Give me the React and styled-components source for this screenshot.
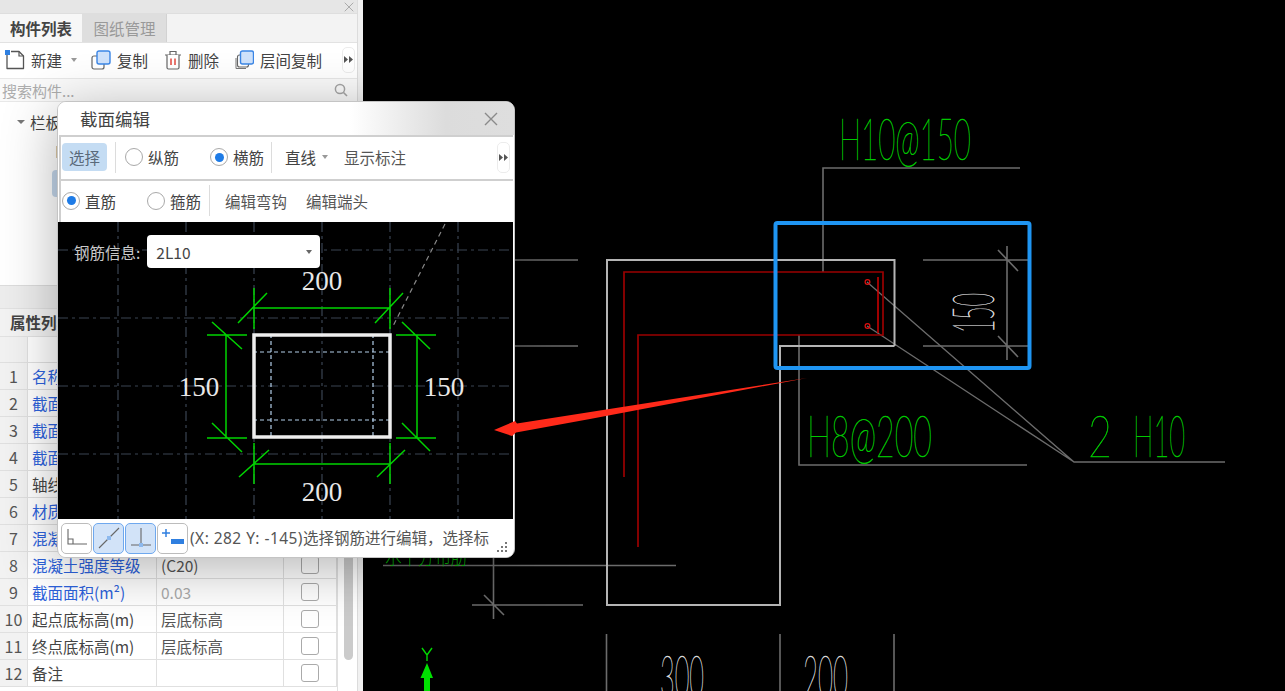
import React from 'react';
import styled, { createGlobalStyle } from 'styled-components';

const GlobalStyle = createGlobalStyle`
  html, body {
    margin: 0;
    padding: 0;
    height: 100%;
    background: #000;
    overflow: hidden;
    font-family: "Noto Sans CJK SC", "Noto Sans", sans-serif;
  }
  #root { height: 100%; }
  * { box-sizing: border-box; }
`;

const Page = styled.div`
  position: relative;
  display: grid;
  grid-template-columns: 363px 1fr;
  width: 100%;
  height: 691px;
  overflow: hidden;
`;

/* ---------- left panel ---------- */

const LeftPanel = styled.aside`
  display: flex;
  flex-direction: column;
  height: 691px;
  overflow: hidden;
  background: #f1f1f1;
  padding-right: 5px;
  font-size: 15.5px;
  color: #444;
`;

const PanelInner = styled.div`
  display: flex;
  flex-direction: column;
  height: 100%;
  background: #fff;
  border-right: 1px solid #dcdcdc;
`;

const PanelTitle = styled.div`
  display: flex;
  align-items: center;
  justify-content: flex-end;
  height: 13px;
  padding-right: 3px;
  background: #e6e6e6;
  color: #aaa;
`;

const TabBar = styled.div`
  display: flex;
  height: 30px;
  background: #f3f3f3;
  border-top: 1px solid #dedede;
  border-bottom: 1px solid #e2e2e2;
`;

const Tab = styled.div`
  display: flex;
  align-items: center;
  justify-content: center;
  width: ${p => (p.$active ? '82px' : '85px')};
  padding-left: 1px;
  padding-bottom: 1px;
  font-weight: ${p => (p.$active ? 700 : 400)};
  color: ${p => (p.$active ? '#444' : '#999')};
  background: ${p => (p.$active ? '#f7f7f7' : '#dedede')};
  border-right: ${p => (p.$active ? '1px solid #f7f7f7' : '1px solid #d2d2d2')};
`;

const Toolbar = styled.div`
  display: flex;
  align-items: center;
  height: 35px;
  flex-shrink: 0;
  padding-bottom: 2px;
  background: #fff;
`;

const ToolItem = styled.div`
  display: flex;
  align-items: center;
  gap: 6px;
  margin-left: ${p => p.$ml}px;
  white-space: nowrap;
`;

const Caret = styled.span`
  display: inline-block;
  width: 0;
  height: 0;
  margin-left: ${p => p.$ml || 0}px;
  border-left: ${p => p.$size || 3.5}px solid transparent;
  border-right: ${p => p.$size || 3.5}px solid transparent;
  border-top: ${p => p.$size || 4}px solid ${p => p.$color || '#999'};
`;

const MoreButton = styled.div`
  display: flex;
  align-items: center;
  justify-content: center;
  width: 13px;
  height: ${p => p.$h}px;
  margin-left: auto;
  margin-right: ${p => p.$mr}px;
  border: 1px solid #ececec;
  border-radius: 5px;
  background: #fff;
`;

const SearchBar = styled.div`
  display: flex;
  align-items: center;
  justify-content: space-between;
  height: 24px;
  flex-shrink: 0;
  padding: 0 9px 0 2px;
  color: #adadad;
  font-size: 15px;
  background: #fafafa;
  border-top: 1px solid #e8e8e8;
  border-bottom: 1px solid #e8e8e8;
`;

const Tree = styled.div`
  height: 183px;
  flex-shrink: 0;
  padding-top: 8px;
  background: #fff;
`;

const TreeRow = styled.div`
  display: flex;
  align-items: center;
  gap: 5px;
  height: 24px;
  padding-left: 17px;
`;

const TreeIcon = styled.div`
  width: 4px;
  height: 12px;
  margin: 12px 0 0 56px;
  background: #dcc9a6;
`;

const TreeSelected = styled.div`
  width: 120px;
  height: 27px;
  margin: 12px 0 0 52px;
  border-radius: 4px;
  background: #c3d6ea;
`;

const SectionGap = styled.div`
  height: 23px;
  flex-shrink: 0;
  background: #ededed;
  border-top: 1px solid #dcdcdc;
`;

const SectionTab = styled.div`
  display: flex;
  align-items: center;
  height: 29px;
  flex-shrink: 0;
  padding-left: 10px;
  padding-bottom: 2px;
  font-weight: 700;
  background: #f3f3f3;
  border-top: 1px solid #e2e2e2;
  border-bottom: 1px solid #e2e2e2;
`;

const TableWrap = styled.div`
  display: flex;
  flex: 1;
  min-height: 0;
`;

const Table = styled.div`
  width: 337px;
  flex-shrink: 0;
`;

const Row = styled.div`
  display: grid;
  grid-template-columns: 28px 129px 127px 53px;
  height: ${p => (p.$head ? '26px' : '27px')};
  border-bottom: 1px solid #e0e0e0;
`;

const Cell = styled.div`
  display: flex;
  align-items: center;
  justify-content: ${p => (p.$center ? 'center' : 'flex-start')};
  padding: 0 0 1px 4px;
  overflow: hidden;
  white-space: nowrap;
  color: ${p => p.$color || '#444'};
  border-right: 1px solid #e0e0e0;
`;

const IndexCell = styled(Cell)`
  justify-content: center;
  padding: 0 0 1px;
  font-size: 16px;
  color: #555;
  background: #f2f2f2;
`;

const CheckCell = styled(Cell)`
  justify-content: center;
  padding: 0 1px 0 0;
`;

const CheckBox = styled.span`
  width: 18px;
  height: 18px;
  border: 1.5px solid #aaa;
  border-radius: 3px;
  background: #fff;
`;

const ScrollTrack = styled.div`
  flex: 1;
  padding: 26px 4px 0 6px;
  border-left: 1px solid #e0e0e0;
`;

const ScrollThumb = styled.div`
  height: 297px;
  border-radius: 5px;
  background: #cbcbcb;
`;

/* ---------- cad canvas ---------- */

const CadArea = styled.main`
  background: #000;
  overflow: hidden;
`;

const CadSvg = styled.svg`
  display: block;
`;

/* ---------- floating dialog ---------- */

const Dialog = styled.section`
  position: absolute;
  left: 57px;
  top: 101px;
  display: flex;
  flex-direction: column;
  width: 458px;
  height: 457px;
  padding: 0 1px;
  overflow: hidden;
  color: #444;
  font-size: 15.5px;
  background: #fff;
  border: 1px solid #c4c4c4;
  border-radius: 9px;
  box-shadow: 0 10px 55px rgba(0, 0, 0, 0.3);
`;

const DialogTitle = styled.header`
  display: flex;
  align-items: center;
  justify-content: space-between;
  height: 33px;
  flex-shrink: 0;
  margin: 0 -1px;
  padding: 0 16px 0 22px;
  font-size: 17.5px;
  color: #444;
  background: linear-gradient(90deg, #fff 0%, #fff 64%, #dcdcdc 85%, #dedede 100%);
`;

const DialogBar = styled.div`
  display: flex;
  align-items: center;
  height: ${p => p.$h}px;
  flex-shrink: 0;
  padding-bottom: 2px;
  background: #fff;
  border-top: 2px solid #cfcfcf;
  border-left: 2px solid #cfcfcf;
  white-space: nowrap;
`;

const SelectButton = styled.div`
  display: flex;
  align-items: center;
  justify-content: center;
  width: 45px;
  height: 28px;
  margin-left: 1px;
  border-radius: 4px;
  color: #5a6a7a;
  background: #c4dcf3;
`;

const Divider = styled.span`
  width: 1px;
  height: 31px;
  margin-left: ${p => p.$ml}px;
  background: #dcdcdc;
`;

const RadioItem = styled.label`
  display: flex;
  align-items: center;
  gap: 5px;
  margin-left: ${p => p.$ml}px;
`;

const RadioMark = styled.span`
  display: flex;
  align-items: center;
  justify-content: center;
  width: 18px;
  height: 18px;
  border: 1.5px solid #a9a9a9;
  border-radius: 50%;
  background: #fff;
  &::after {
    content: '';
    width: 9px;
    height: 9px;
    border-radius: 50%;
    background: ${p => (p.$checked ? '#1e7be6' : 'transparent')};
  }
`;

const BarText = styled.span`
  margin-left: ${p => p.$ml}px;
  color: #555;
`;

const Combo = styled.div`
  display: flex;
  align-items: center;
  height: 28px;
  margin-left: 10px;
  padding-left: 3px;
  border-radius: 4px;
`;

const DrawArea = styled.div`
  position: relative;
  flex: 1;
  min-height: 0;
  margin-left: -1px;
  background: #000;
`;

const RebarField = styled.div`
  position: absolute;
  left: 16px;
  top: 13px;
  display: flex;
  align-items: center;
  gap: 7px;
  color: #c9c9c9;
`;

const RebarSelect = styled.div`
  display: flex;
  align-items: center;
  justify-content: space-between;
  width: 173px;
  height: 33px;
  padding: 0 8px 0 9px;
  border-radius: 4px;
  color: #444;
  background: #fff;
`;

const StatusBar = styled.footer`
  display: flex;
  align-items: center;
  height: 38px;
  flex-shrink: 0;
  padding: 0 3px 0 2px;
  gap: 1px;
  background: #fff;
  white-space: nowrap;
`;

const SnapButton = styled.div`
  display: flex;
  align-items: center;
  justify-content: center;
  width: 31px;
  height: 31px;
  flex-shrink: 0;
  border: 1.5px solid ${p => (p.$on ? '#6ea8ee' : '#bcbcbc')};
  border-radius: 5px;
  background: ${p => (p.$on ? '#d2e3f8' : '#fff')};
`;

const StatusText = styled.span`
  margin-left: 1px;
  padding-bottom: 2px;
  font-size: 15.5px;
  color: #555;
`;

const StatusCoords = styled.span`
  font-family: "Noto Sans", sans-serif;
  letter-spacing: 0.45px;
`;

const GripSlot = styled.span`
  display: flex;
  align-self: flex-end;
  margin: 0 2px 4px auto;
`;

const Overlay = styled.svg`
  position: absolute;
  left: 0;
  top: 0;
  pointer-events: none;
`;

/* ---------- icons ---------- */

const CloseIcon = ({ size, color }) => (
  <svg width={size} height={size} viewBox="0 0 14 14">
    <path d="M1 1 13 13M13 1 1 13" stroke={color} strokeWidth="1.4" fill="none" />
  </svg>
);

const MoreIcon = () => (
  <svg width="9" height="7" viewBox="0 0 9 7">
    <path d="M0 0 4 3.5 0 7ZM5 0 9 3.5 5 7Z" fill="#555" />
  </svg>
);

const NewIcon = () => (
  <svg width="20" height="20" viewBox="0 0 20 20">
    <path d="M2 4V18.5H18.5V6L14 1.5H6" fill="#fff" stroke="#555" strokeWidth="1.3" strokeLinejoin="round" />
    <path d="M14 1.5V6H18.5" fill="none" stroke="#555" strokeWidth="1.2" />
    <rect x="0" y="0" width="5" height="5" fill="#2f7fe0" />
  </svg>
);

const CopyIcon = () => (
  <svg width="20" height="20" viewBox="0 0 20 20">
    <rect x="1" y="6" width="12" height="13" rx="2" fill="#fff" stroke="#666" strokeWidth="1.2" />
    <rect x="6" y="1" width="13" height="13" rx="2" fill="#cfe2fb" stroke="#3b86e6" strokeWidth="1.4" />
  </svg>
);

const TrashIcon = () => (
  <svg width="18" height="20" viewBox="0 0 18 20">
    <path d="M1 5H17M6 5V1.5H12V5" fill="none" stroke="#666" strokeWidth="1.2" />
    <path d="M3 5V17.5Q3 19 4.5 19H13.5Q15 19 15 17.5V5" fill="#fff" stroke="#666" strokeWidth="1.2" />
    <path d="M7 8.5V15M11 8.5V15" stroke="#e2483f" strokeWidth="1.5" />
  </svg>
);

const LayerCopyIcon = () => (
  <svg width="20" height="20" viewBox="0 0 20 20">
    <path d="M2 8V18.5H12" fill="none" stroke="#777" strokeWidth="1" />
    <rect x="3.5" y="5" width="11" height="12" rx="2" fill="#fff" stroke="#666" strokeWidth="1.1" />
    <rect x="6.5" y="1" width="13" height="13" rx="2" fill="#cfe2fb" stroke="#3b86e6" strokeWidth="1.4" />
  </svg>
);

const SearchIcon = () => (
  <svg width="14" height="14" viewBox="0 0 14 14">
    <circle cx="6" cy="6" r="4.6" fill="none" stroke="#a5a5a5" strokeWidth="1.5" />
    <path d="M9.5 9.5 13 13" stroke="#a5a5a5" strokeWidth="1.6" />
  </svg>
);

const GripIcon = () => (
  <svg width="11" height="11" viewBox="0 0 11 11">
    <path d="M8 0h2v2H8zM4 4h2v2H4zM8 4h2v2H8zM0 8h2v2H0zM4 8h2v2H4zM8 8h2v2H8z" fill="#777" />
  </svg>
);

const SnapCorner = () => (
  <svg width="22" height="20" viewBox="0 0 22 20">
    <path d="M2 1V16H21M2 11H7V16" fill="none" stroke="#666" strokeWidth="1.1" />
  </svg>
);

const SnapLine = () => (
  <svg width="22" height="22" viewBox="0 0 22 22">
    <path d="M1 21 21 1" stroke="#666" strokeWidth="1.1" />
    <rect x="9" y="9" width="4" height="4" fill="#8db9ee" />
  </svg>
);

const SnapPerp = () => (
  <svg width="22" height="20" viewBox="0 0 22 20">
    <path d="M11 0V17M1 17H21" stroke="#666" strokeWidth="1.1" />
    <rect x="9" y="15" width="4" height="4" fill="#8db9ee" />
  </svg>
);

const SnapPlus = () => (
  <svg width="24" height="20" viewBox="0 0 24 20">
    <path d="M5 1V9M1 5H9" stroke="#2f7fe0" strokeWidth="1.5" />
    <rect x="10" y="11" width="13" height="5" fill="#2f7fe0" />
  </svg>
);

/* ---------- drawings ---------- */

const CadLabel = styled.text`
  font-family: "Lato", "Liberation Sans", "Noto Sans CJK SC", sans-serif;
  font-weight: 100;
  font-size: ${p => p.$size}px;
  fill: ${p => p.$color};
  stroke: ${p => p.$color};
  stroke-width: ${p => p.$stroke};
`;

const DimLabel = styled.text`
  font-family: "Liberation Serif", serif;
  font-size: 27px;
  fill: #e8e8e8;
  text-anchor: middle;
`;

const CadDrawing = () => (
  <CadSvg width="922" height="691" viewBox="363 0 922 691" fill="none">
    <g stroke="#6c6c6c" strokeWidth="1.6">
      <path d="M823 272V168H1020" />
      <path d="M799 335V465H1027" />
      <path d="M867 282 1074 462H1225M867 326 1074 462" strokeWidth="1.3" />
      <path d="M923 260H1030M923 346H1030M1007 246V360M998 250 1018 271M998 336 1018 357" />
      <path d="M515 260H578M515 346H578" />
      <path d="M383 565.5H676M493.5 558V619M472 605H583M484 595 504 615" />
      <path d="M606.5 634V691M780 634V691M894 634V691" />
    </g>
    <path d="M894.5 346V260H607V605H780V346H894.5" stroke="#b4b4b4" strokeWidth="2" />
    <path d="M624 477V272H883V335H638V547" stroke="#9a0000" strokeWidth="1.7" />
    <path d="M878 277V333" stroke="#d40000" strokeWidth="1.5" />
    <circle cx="867.5" cy="282" r="2.4" stroke="#e01010" strokeWidth="1.2" />
    <circle cx="867.5" cy="326" r="2.4" stroke="#e01010" strokeWidth="1.2" />
    <rect x="775.5" y="223" width="254" height="145" rx="2" stroke="#1f95f2" strokeWidth="4" />
    <CadLabel $size={58} $color="#00c800" $stroke={0.6} x="839" y="160" textLength="132" lengthAdjust="spacingAndGlyphs">H10@150</CadLabel>
    <CadLabel $size={58} $color="#00c800" $stroke={0.6} x="807" y="457" textLength="125" lengthAdjust="spacingAndGlyphs">H8@200</CadLabel>
    <CadLabel $size={58} $color="#00c800" $stroke={0.6} x="1088" y="457" textLength="24" lengthAdjust="spacingAndGlyphs">2</CadLabel>
    <CadLabel $size={58} $color="#00c800" $stroke={0.6} x="1133" y="457" textLength="52" lengthAdjust="spacingAndGlyphs">H10</CadLabel>
    <CadLabel $size={24} $color="#00c800" $stroke={0.2} x="385" y="564" textLength="82" lengthAdjust="spacingAndGlyphs">水平分布筋</CadLabel>
    <CadLabel $size={58} $color="#d8d8d8" $stroke={0.6} transform="translate(994 333) rotate(-90)" textLength="40" lengthAdjust="spacingAndGlyphs">150</CadLabel>
    <CadLabel $size={60} $color="#d8d8d8" $stroke={0.6} x="660" y="698" textLength="44" lengthAdjust="spacingAndGlyphs">300</CadLabel>
    <CadLabel $size={60} $color="#d8d8d8" $stroke={0.6} x="803" y="698" textLength="45" lengthAdjust="spacingAndGlyphs">200</CadLabel>
    <path d="M422 648 427 655 432 648M427 655V661" stroke="#00d800" strokeWidth="1.4" />
    <path d="M427 663 433 678H430V691H424V678H420.5Z" fill="#00e000" />
  </CadSvg>
);

const gridXs = [118, 186, 254, 322, 390, 458];
const gridYs = [250, 318, 386, 454];

const SectionDrawing = () => (
  <svg width="455" height="297" viewBox="58 222 455 297" fill="none" style={{ display: 'block' }}>
    <g stroke="#3a4452" strokeWidth="1.2" strokeDasharray="10 4 3 4">
      {gridXs.map(x => <path key={x} d={`M${x} 222V519`} />)}
      {gridYs.map(y => <path key={y} d={`M58 ${y}H513`} />)}
    </g>
    <path d="M445 224 392 328" stroke="#888" strokeWidth="1.2" strokeDasharray="5 4" />
    <g stroke="#00d400" strokeWidth="1.5">
      <path d="M254 308H390M254 288V329M390 288V329M238 323 267 293M375 323 403 293" />
      <path d="M254 464H390M254 443V484M390 443V484M239 477 269 450M377 477 405 450" />
      <path d="M226 335V438M207 335H247M207 438H247M212 322 242 349M212 423 242 452" />
      <path d="M417 335V438M396 335H436M396 438H436M402 322 430 349M402 423 430 451" />
    </g>
    <path d="M271 334V438M373 334V438M253 352H391M253 420H391" stroke="#b4cfe9" strokeWidth="1.2" strokeDasharray="4 3" />
    <rect x="254" y="335" width="136" height="102" stroke="#eeeeee" strokeWidth="3.5" />
    <DimLabel x="322" y="290">200</DimLabel>
    <DimLabel x="322" y="501">200</DimLabel>
    <DimLabel x="199" y="396">150</DimLabel>
    <DimLabel x="444" y="396">150</DimLabel>
  </svg>
);

const rows = [
  { label: '名称', blue: true, value: 'LB-1' },
  { label: '截面宽度(mm)', blue: true, value: '200' },
  { label: '截面高度(mm)', blue: true, value: '150' },
  { label: '截面类型', blue: true, value: '矩形' },
  { label: '轴线距左边线', value: '(100)' },
  { label: '材质', blue: true, value: '现浇混凝土' },
  { label: '混凝土类型', blue: true, value: '(现浇砼)' },
  { label: '混凝土强度等级', blue: true, value: '(C20)' },
  { label: '截面面积(m²)', blue: true, value: '0.03', muted: true },
  { label: '起点底标高(m)', value: '层底标高' },
  { label: '终点底标高(m)', value: '层底标高' },
  { label: '备注', value: '' },
];

const App = () => (
  <Page>
    <GlobalStyle />
    <LeftPanel>
      <PanelInner>
        <PanelTitle><CloseIcon size={10} color="#aaa" /></PanelTitle>
        <TabBar>
          <Tab $active>构件列表</Tab>
          <Tab>图纸管理</Tab>
        </TabBar>
        <Toolbar>
          <ToolItem $ml={5}><NewIcon />新建<Caret $ml={3} /></ToolItem>
          <ToolItem $ml={14}><CopyIcon />复制</ToolItem>
          <ToolItem $ml={16}><TrashIcon />删除</ToolItem>
          <ToolItem $ml={15}><LayerCopyIcon />层间复制</ToolItem>
          <MoreButton $h={26} $mr={2}><MoreIcon /></MoreButton>
        </Toolbar>
        <SearchBar>搜索构件...<SearchIcon /></SearchBar>
        <Tree>
          <TreeRow><Caret $color="#777" $size={4.5} />栏板</TreeRow>
          <TreeIcon />
          <TreeSelected />
        </Tree>
        <SectionGap />
        <SectionTab>属性列表</SectionTab>
        <TableWrap>
          <Table>
            <Row $head>
              <IndexCell />
              <Cell $center>属性名称</Cell>
              <Cell $center>属性值</Cell>
              <CheckCell />
            </Row>
            {rows.map((row, index) => (
              <Row key={row.label}>
                <IndexCell>{index + 1}</IndexCell>
                <Cell $color={row.blue ? '#2c62dc' : '#444'}>{row.label}</Cell>
                <Cell $color={row.muted ? '#aaa' : '#555'}>{row.value}</Cell>
                <CheckCell><CheckBox /></CheckCell>
              </Row>
            ))}
          </Table>
          <ScrollTrack><ScrollThumb /></ScrollTrack>
        </TableWrap>
      </PanelInner>
    </LeftPanel>

    <CadArea><CadDrawing /></CadArea>

    <Dialog>
      <DialogTitle>截面编辑<CloseIcon size={14} color="#8a8a8a" /></DialogTitle>
      <DialogBar $h={44}>
        <SelectButton>选择</SelectButton>
        <Divider $ml={8} />
        <RadioItem $ml={9}><RadioMark />纵筋</RadioItem>
        <RadioItem $ml={31}><RadioMark $checked />横筋</RadioItem>
        <Divider $ml={7} />
        <Combo>直线<Caret $ml={6} /></Combo>
        <BarText $ml={16}>显示标注</BarText>
        <MoreButton $h={31} $mr={3}><MoreIcon /></MoreButton>
      </DialogBar>
      <DialogBar $h={43}>
        <RadioItem $ml={1}><RadioMark $checked />直筋</RadioItem>
        <RadioItem $ml={31}><RadioMark />箍筋</RadioItem>
        <Divider $ml={8} />
        <BarText $ml={15}>编辑弯钩</BarText>
        <BarText $ml={19}>编辑端头</BarText>
      </DialogBar>
      <DrawArea>
        <SectionDrawing />
        <RebarField>
          钢筋信息:
          <RebarSelect>2L10<Caret $color="#666" /></RebarSelect>
        </RebarField>
      </DrawArea>
      <StatusBar>
        <SnapButton><SnapCorner /></SnapButton>
        <SnapButton $on><SnapLine /></SnapButton>
        <SnapButton $on><SnapPerp /></SnapButton>
        <SnapButton><SnapPlus /></SnapButton>
        <StatusText><StatusCoords>(X: 282 Y: -145)</StatusCoords>选择钢筋进行编辑，选择标</StatusText>
        <GripSlot><GripIcon /></GripSlot>
      </StatusBar>
    </Dialog>

    <Overlay width="1285" height="691" viewBox="0 0 1285 691">
      <path d="M807 378 517 423.5 515 421 494 430 512 436 516 432.5 590 419Z" fill="#ff2a1a" />
    </Overlay>
  </Page>
);

export default App;
